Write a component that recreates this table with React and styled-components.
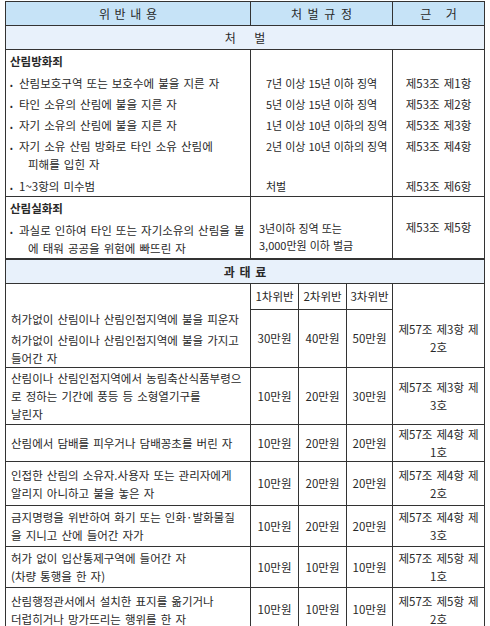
import React from 'react';
import styled, { createGlobalStyle } from 'styled-components';

const GlobalStyle = createGlobalStyle`
  html, body {
    margin: 0;
    padding: 0;
    background: #fff;
  }
  body {
    font-family: "Noto Sans CJK KR", "Noto Sans", sans-serif;
    color: #282828;
  }
`;

const Page = styled.div`
  width: 490px;
  height: 626px;
  padding: 1px 0 0 5px;
  box-sizing: border-box;
  overflow: hidden;
`;

const Table = styled.table`
  border-collapse: collapse;
  table-layout: fixed;
  width: 479px;
  font-size: 11.5px;
  line-height: 17px;
  word-spacing: 1.5px;
  border: 1px solid #333;
`;

const Col = styled.col`
  width: ${p => p.$w}px;
`;

const HeadCell = styled.th`
  height: 23px;
  padding: 0;
  background: #c6e3f7;
  border: 1px solid #333;
  font-size: 12px;
  font-weight: normal;
  text-align: center;
  word-spacing: ${p => p.$ws || 0}px;
`;

const BandCell = styled.th`
  height: ${p => p.$h}px;
  padding: 0;
  background: #e8f1fb;
  border: 1px solid #333;
  border-top-width: ${p => (p.$thick ? 2 : 1)}px;
  font-size: 12px;
  font-weight: ${p => (p.$bold ? 'bold' : 'normal')};
  text-align: center;
  word-spacing: ${p => p.$ws || 0}px;
`;

const Cell = styled.td`
  height: ${p => (p.$h ? `${p.$h}px` : 'auto')};
  padding: ${p => p.$pad || '0 4px'};
  border-left: 1px solid #333;
  border-right: 1px solid #333;
  border-top: ${p => (p.$cont ? 'none' : '1px solid #333')};
  text-align: ${p => p.$align || 'left'};
  vertical-align: ${p => p.$valign || 'middle'};
  line-height: ${p => p.$lh || 17}px;
  white-space: nowrap;
  overflow: hidden;
`;

/* 처벌 규정 column of the 처벌 part: a little smaller, tighter spacing */
const PenaltyCell = styled(Cell)`
  font-size: 11px;
  word-spacing: 0.5px;
`;

const Title = styled.div`
  font-weight: bold;
  font-size: 11.5px;
  word-spacing: 0;
`;

const Bullet = styled.div`
  &::before {
    content: '•';
    display: inline-block;
    width: 9px;
    font-size: 8px;
  }
`;

const Indent = styled.div`
  padding-left: 18px;
`;

const Para = styled.div`
  & + & {
    margin-top: 3px;
  }
`;

const arson = [
  { text: ['산림보호구역 또는 보호수에 불을 지른 자'], penalty: '7년 이상 15년 이하 징역', basis: '제53조 제1항', h: 21 },
  { text: ['타인 소유의 산림에 불을 지른 자'], penalty: '5년 이상 15년 이하 징역', basis: '제53조 제2항', h: 21 },
  { text: ['자기 소유의 산림에 불을 지른 자'], penalty: '1년 이상 10년 이하의 징역', basis: '제53조 제3항', h: 21 },
  { text: ['자기 소유 산림 방화로 타인 소유 산림에', '피해를 입힌 자'], penalty: '2년 이상 10년 이하의 징역', basis: '제53조 제4항', h: 39 },
  { text: ['1~3항의 미수범'], penalty: '처벌', basis: '제53조 제6항', h: 19 },
];

const fines = [
  {
    paras: [
      ['허가없이 산림이나 산림인접지역에 불을 피운자'],
      ['허가없이 산림이나 산림인접지역에 불을 가지고', '들어간 자'],
    ],
    amounts: ['30만원', '40만원', '50만원'],
    basis: ['제57조 제3항 제', '2호'],
    h: 58,
  },
  {
    paras: [['산림이나 산림인접지역에서 농림축산식품부령으', '로 정하는 기간에 풍등 등 소형열기구를', '날린자']],
    amounts: ['10만원', '20만원', '30만원'],
    basis: ['제57조 제3항 제', '3호'],
    h: 56,
  },
  {
    paras: [['산림에서 담배를 피우거나 담배꽁초를 버린 자']],
    amounts: ['10만원', '20만원', '20만원'],
    basis: ['제57조 제4항 제', '1호'],
    h: 34,
  },
  {
    paras: [['인접한 산림의 소유자.사용자 또는 관리자에게', '알리지 아니하고 불을 놓은 자']],
    amounts: ['10만원', '20만원', '20만원'],
    basis: ['제57조 제4항 제', '2호'],
    h: 43,
  },
  {
    paras: [['금지명령을 위반하여 화기 또는 인화·발화물질', '을 지니고 산에 들어간 자가']],
    amounts: ['10만원', '20만원', '20만원'],
    basis: ['제57조 제4항 제', '3호'],
    h: 40,
  },
  {
    paras: [['허가 없이 입산통제구역에 들어간 자', '(차량 통행을 한 자)']],
    amounts: ['10만원', '10만원', '10만원'],
    basis: ['제57조 제5항 제', '1호'],
    h: 40,
  },
  {
    paras: [['산림행정관서에서 설치한 표지를 옮기거나', '더럽히거나 망가뜨리는 행위를 한 자']],
    amounts: ['10만원', '10만원', '10만원'],
    basis: ['제57조 제5항 제', '2호'],
    h: 43,
  },
];

const Lines = ({ lines }) => lines.map((l, i) => <div key={i}>{l}</div>);

const App = () => {
  return (
    <Page>
      <GlobalStyle />
      <Table>
        <colgroup>
          <Col $w={245} />
          <Col $w={48} />
          <Col $w={48} />
          <Col $w={46} />
          <Col $w={92} />
        </colgroup>
        <tbody>
          <tr>
            <HeadCell $ws={2}>위 반 내 용</HeadCell>
            <HeadCell colSpan={3} $ws={3}>처 벌 규 정</HeadCell>
            <HeadCell $ws={12}>근 거</HeadCell>
          </tr>
          <tr>
            <BandCell colSpan={5} $h={23} $ws={16}>처 벌</BandCell>
          </tr>

          {/* 산림방화죄 */}
          <tr>
            <Cell $h={23}><Title>산림방화죄</Title></Cell>
            <Cell colSpan={3} />
            <Cell />
          </tr>
          {arson.map((r, i) => {
            const tall = r.text.length > 1;
            const va = tall ? 'top' : 'middle';
            const pt = tall ? '2px' : '0';
            return (
              <tr key={i}>
                <Cell $cont $h={r.h} $valign={va} $pad={`${pt} 4px 0 4px`}>
                  <Bullet>{r.text[0]}</Bullet>
                  {r.text[1] && <Indent>{r.text[1]}</Indent>}
                </Cell>
                <PenaltyCell $cont colSpan={3} $valign={va} $pad={`${pt} 0 0 15px`}>{r.penalty}</PenaltyCell>
                <Cell $cont $align="center" $valign={va} $pad={`${pt} 2px 0 2px`}>{r.basis}</Cell>
              </tr>
            );
          })}

          {/* 산림실화죄 */}
          <tr>
            <Cell $h={23}><Title>산림실화죄</Title></Cell>
            <Cell colSpan={3} />
            <Cell rowSpan={2} $align="center" $pad="0 2px">제53조 제5항</Cell>
          </tr>
          <tr>
            <Cell $cont $h={36}>
              <Bullet>과실로 인하여 타인 또는 자기소유의 산림을 불</Bullet>
              <Indent>에 태워 공공을 위험에 빠뜨린 자</Indent>
            </Cell>
            <PenaltyCell $cont colSpan={3} $pad="0 0 4px 8px">
              <Lines lines={['3년이하 징역 또는', '3,000만원 이하 벌금']} />
            </PenaltyCell>
          </tr>

          {/* 과태료 */}
          <tr>
            <BandCell colSpan={5} $h={23} $thick $bold $ws={2}>과 태 료</BandCell>
          </tr>
          <tr>
            <Cell $h={25} />
            <Cell $align="center" $pad="0">1차위반</Cell>
            <Cell $align="center" $pad="0">2차위반</Cell>
            <Cell $align="center" $pad="0">3차위반</Cell>
            <Cell />
          </tr>
          {fines.map((r, i) => (
            <tr key={i}>
              <Cell $cont={i === 0} $h={r.h} $lh={18} $pad="0 4px 0 5px">
                {r.paras.map((p, j) => (
                  <Para key={j}><Lines lines={p} /></Para>
                ))}
              </Cell>
              {r.amounts.map((a, j) => (
                <Cell key={j} $align="center" $pad="0">{a}</Cell>
              ))}
              <Cell $cont={i === 0} $align="center" $lh={18} $pad="0 2px">
                <Lines lines={r.basis} />
              </Cell>
            </tr>
          ))}
        </tbody>
      </Table>
    </Page>
  );
};

export default App;
